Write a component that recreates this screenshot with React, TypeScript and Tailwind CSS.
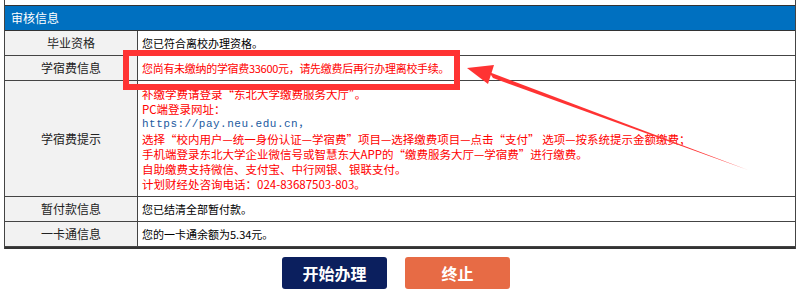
import React from "react";

const cjk = { fontFamily: '"Noto Sans CJK SC", "Liberation Sans", sans-serif' };

function Row({ label, children, tall }: { label: string; children: React.ReactNode; tall?: boolean }) {
  return (
    <div className={`flex border-b border-[#444] ${tall ? "h-[116px]" : "h-[25px]"}`}>
      <div className="w-[133px] shrink-0 bg-[#f2f2f2] border-r border-[#444] flex items-center justify-center text-[12px] text-[#222]">
        {label}
      </div>
      <div className="flex-1 flex items-center pl-[4px] text-[11px] text-black">{children}</div>
    </div>
  );
}

export default function App() {
  return (
    <div className="relative w-[797px] h-[301px] bg-white overflow-hidden" style={cjk}>
      <div className="ml-[4px] w-[792px] border-x border-[#444]">
        <div className="h-[6px] border-b border-[#333]" />
        <div className="h-[25px] bg-[#0070c0] border-b border-[#333] flex items-center pl-[6px] text-[12px] text-white">
          审核信息
        </div>
        <Row label="毕业资格">您已符合离校办理资格。</Row>
        <Row label="学宿费信息">
          <span className="text-[#ff0000] tracking-[-0.3px]">您尚有未缴纳的学宿费33600元，请先缴费后再行办理离校手续。</span>
        </Row>
        <Row label="学宿费提示" tall>
          <div className="flex flex-col text-[#ff0000] text-[11.5px] leading-[15px] pt-[1px]">
            <span>补缴学费请登录“东北大学缴费服务大厅”。</span>
            <span>PC端登录网址：</span>
            <span className="text-[#1a5aa0] text-[11px] tracking-[0.5px]" style={{ fontFamily: '"Liberation Mono", "Noto Sans CJK SC", monospace' }}>
              https://pay.neu.edu.cn，
            </span>
            <span>选择“校内用户—统一身份认证—学宿费”项目—选择缴费项目—点击“支付” 选项—按系统提示金额缴费；</span>
            <span>手机端登录东北大学企业微信号或智慧东大APP的“缴费服务大厅—学宿费”进行缴费。</span>
            <span>自助缴费支持微信、支付宝、中行网银、银联支付。</span>
            <span>计划财经处咨询电话：024-83687503-803。</span>
          </div>
        </Row>
        <Row label="暂付款信息">您已结清全部暂付款。</Row>
        <div className="border-b-2 border-[#333]">
          <Row label="一卡通信息">您的一卡通余额为5.34元。</Row>
        </div>
      </div>

      <div className="flex justify-center gap-[18px] mt-[8px] pr-[5px]">
        <button className="w-[105px] h-[32px] rounded-[3px] bg-[#0b1f5e] text-white text-[16px] font-bold">
          开始办理
        </button>
        <button className="w-[105px] h-[32px] rounded-[3px] bg-[#e76b45] text-white text-[16px] font-bold">
          终止
        </button>
      </div>

      {/* annotation */}
      <div className="absolute left-[123px] top-[50px] w-[337px] h-[40px] border-[6px] border-[#f33]" />
      <svg className="absolute left-0 top-0" width="797" height="301">
        <polygon points="467,68 494,65 488,84" fill="#f33" />
        <polygon points="489,72 493,78 748,170" fill="#f33" />
      </svg>
    </div>
  );
}
